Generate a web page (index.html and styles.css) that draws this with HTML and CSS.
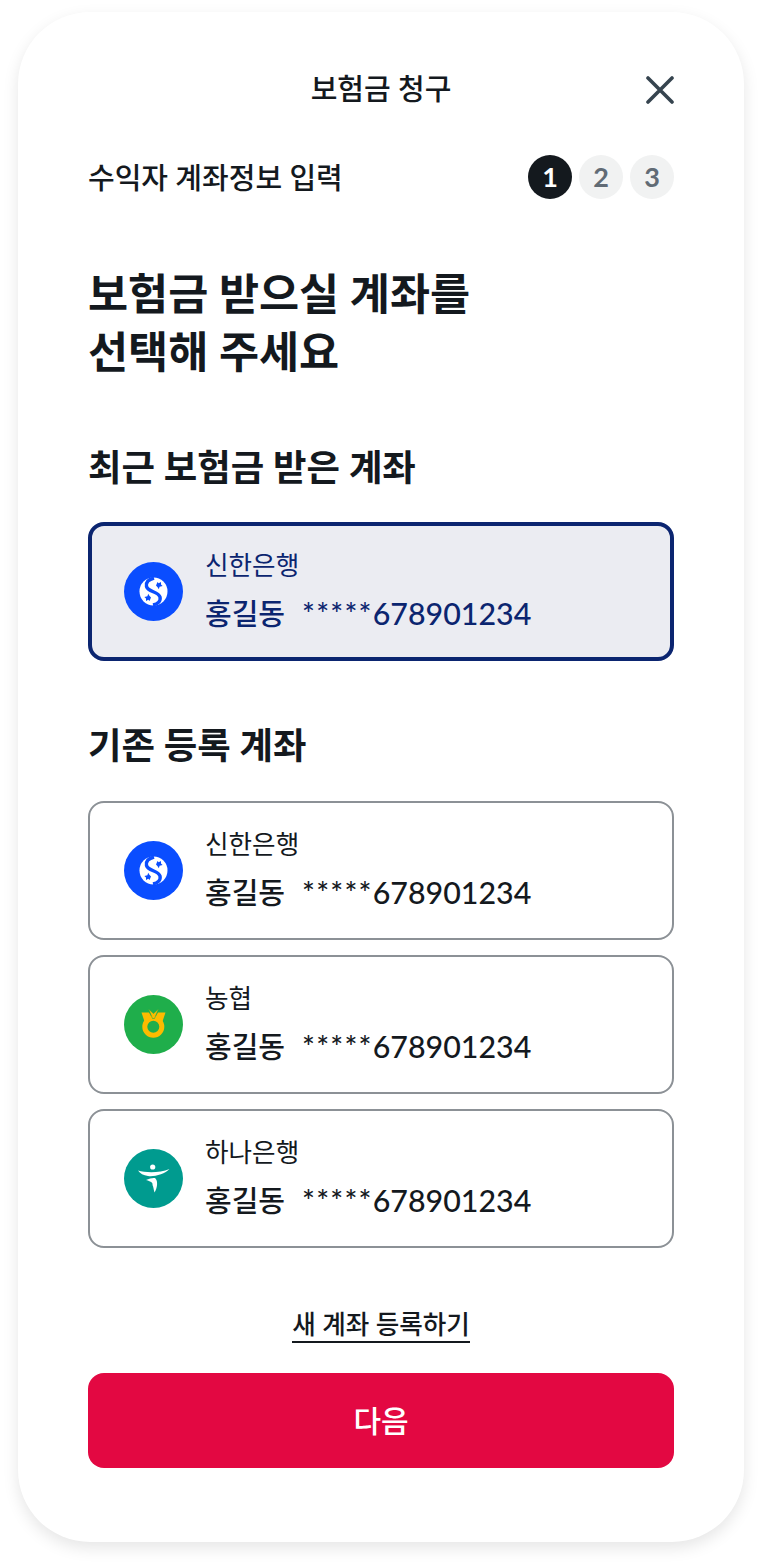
FILE: index.html
```html
<!DOCTYPE html>
<html lang="ko">

<head>
    <meta charset="UTF-8">
    <meta name="viewport" content="width=device-width, initial-scale=1.0">
    <title>보험금 청구</title>
    <link rel="stylesheet" href="styles.css">
</head>

<body>
    <div class="sheet">
        <div class="header">
            <span></span>
            <h1 class="headerTitle">보험금 청구</h1>
            <button class="close" aria-label="닫기">
                <svg width="28" height="28" viewBox="0 0 28 28" fill="none">
                    <path d="M2 2L26 26M26 2L2 26" stroke="#36444f" stroke-width="3.6" stroke-linecap="round"/>
                </svg>
            </button>
        </div>

        <div class="stepRow">
            <p class="stepName">수익자 계좌정보 입력</p>
            <div class="steps">
                <span class="step active">1</span>
                <span class="step">2</span>
                <span class="step">3</span>
            </div>
        </div>

        <h2 class="question">보험금 받으실 계좌를<br>선택해 주세요</h2>

        <h3 class="sectionTitle recent">최근 보험금 받은 계좌</h3>
        <div class="account selected">
            <svg class="logo" viewBox="0 0 59 59">
                <circle cx="29.5" cy="29.5" r="29.5" fill="#0a4dff"/>
                <circle cx="29.5" cy="29.5" r="14" fill="#fff"/>
                <path d="M30 16C24.5 17.5 21.5 20.5 22.5 24.5C24 30 34.5 29.5 36 35C37 39 34 42 29 43" stroke="#0a4dff" stroke-width="3.4" fill="none"/>
                <path d="M32 23.5l1.5-3.5 1.2 1.2 2.3-1.2 0 2.6 1.6 1.4-3 .8-.8 2.4-1.2-2z" fill="#0a4dff"/>
                <path d="M32 23.5l1.5-3.5 1.2 1.2 2.3-1.2 0 2.6 1.6 1.4-3 .8-.8 2.4-1.2-2z" fill="#0a4dff" transform="rotate(180 29.5 29.5)"/>
            </svg>
            <div class="accountText">
                <p class="bank">신한은행</p>
                <p class="number"><span class="holder">홍길동</span><span class="mask">*****</span>678901234</p>
            </div>
        </div>

        <h3 class="sectionTitle saved">기존 등록 계좌</h3>
        <div class="accountList">
            <div class="account">
                <svg class="logo" viewBox="0 0 59 59">
                    <circle cx="29.5" cy="29.5" r="29.5" fill="#0a4dff"/>
                    <circle cx="29.5" cy="29.5" r="14" fill="#fff"/>
                    <path d="M30 16C24.5 17.5 21.5 20.5 22.5 24.5C24 30 34.5 29.5 36 35C37 39 34 42 29 43" stroke="#0a4dff" stroke-width="3.4" fill="none"/>
                    <path d="M32 23.5l1.5-3.5 1.2 1.2 2.3-1.2 0 2.6 1.6 1.4-3 .8-.8 2.4-1.2-2z" fill="#0a4dff"/>
                    <path d="M32 23.5l1.5-3.5 1.2 1.2 2.3-1.2 0 2.6 1.6 1.4-3 .8-.8 2.4-1.2-2z" fill="#0a4dff" transform="rotate(180 29.5 29.5)"/>
                </svg>
                <div class="accountText">
                    <p class="bank">신한은행</p>
                    <p class="number"><span class="holder">홍길동</span><span class="mask">*****</span>678901234</p>
                </div>
            </div>
            <div class="account">
                <svg class="logo" viewBox="0 0 59 59">
                    <circle cx="29.5" cy="29.5" r="29.5" fill="#1fae4b"/>
                    <circle cx="29.3" cy="31.7" r="8.5" fill="none" stroke="#fdbb00" stroke-width="5"/>
                    <path d="M17.5 17.5L25 17.5L29 24.5L23 25.5L21 28Z" fill="#fdbb00"/>
                    <path d="M41.5 17.5L34 17.5L30 24.5L36 25.5L38 28Z" fill="#fdbb00"/>
                    <path d="M24.5 14L29.5 18.5L34.5 14L30.5 23.5L28.5 23.5Z" fill="#fdbb00" stroke="#1fae4b" stroke-width="0.6"/>
                </svg>
                <div class="accountText">
                    <p class="bank">농협</p>
                    <p class="number"><span class="holder">홍길동</span><span class="mask">*****</span>678901234</p>
                </div>
            </div>
            <div class="account">
                <svg class="logo" viewBox="0 0 59 59">
                    <circle cx="29.5" cy="29.5" r="29.5" fill="#009b8f"/>
                    <circle cx="28.7" cy="18" r="2.6" fill="#fff"/>
                    <path d="M14 21.5C22 24 36 24 45.5 20C41 25 30 28 24 27C19.5 26.5 16 24.5 14 21.5Z" fill="#fff"/>
                    <path d="M22 31C26 29.5 30 28.5 31.5 29.5C34 32 33.5 39 30.5 43.5C29.5 40 29.5 38 28.5 36C29 34 27.5 32.5 22 31Z" fill="#fff"/>
                </svg>
                <div class="accountText">
                    <p class="bank">하나은행</p>
                    <p class="number"><span class="holder">홍길동</span><span class="mask">*****</span>678901234</p>
                </div>
            </div>
        </div>

        <a class="addAccount" href="#">새 계좌 등록하기</a>
        <button class="next">다음</button>
    </div>
</body>

</html>
```

FILE: styles.css
```css
*{
    margin: 0;
    padding: 0;
    box-sizing: border-box;
}
body{
    width: 762px;
    height: 1566px;
    padding: 12px 18px 24px;
    background-color: #fff;
    font-family: "Lato", "Noto Sans CJK KR", sans-serif;
    color: #14191e;
}
.sheet{
    height: 1530px;
    padding: 0 70px;
    display: flex;
    flex-direction: column;
    border-radius: 72px;
    background-color: #fff;
    box-shadow: 0px 6px 16px rgba(0,0,0,0.1);
}
.header{
    margin-top: 54px;
    height: 36px;
    display: grid;
    grid-template-columns: 28px 1fr 28px;
    align-items: center;
}
.headerTitle{
    text-align: center;
    font-size: 29px;
    font-weight: 500;
}
.close{
    display: flex;
    width: 28px;
    height: 28px;
    margin-top: 6px;
    border: none;
    background: none;
}
.stepRow{
    margin-top: 53px;
    height: 44px;
    display: flex;
    justify-content: space-between;
    align-items: center;
}
.stepName{
    font-size: 29px;
    font-weight: 500;
    padding-bottom: 2px;
}
.steps{
    display: flex;
    gap: 7px;
}
.step{
    width: 44px;
    height: 44px;
    padding-bottom: 2px;
    display: flex;
    justify-content: center;
    align-items: center;
    border-radius: 50%;
    font-size: 27px;
    font-weight: 700;
    color: #616b75;
    background-color: #f1f2f2;
}
.step.active{
    color: #fff;
    background-color: #14191e;
}
.question{
    margin-top: 65px;
    font-size: 43.6px;
    font-weight: 700;
    line-height: 58px;
}
.sectionTitle{
    font-size: 36.4px;
    font-weight: 700;
    line-height: 48px;
}
.recent{
    margin-top: 63px;
}
.saved{
    margin-top: 60px;
}
.account{
    height: 139px;
    padding: 0 34px;
    display: flex;
    align-items: center;
    gap: 22px;
    border: 2px solid #8c9196;
    border-radius: 16px;
}
.recent + .account{
    margin-top: 31px;
}
.selected{
    color: #0b2570;
    border: 4px solid #0b2570;
    padding: 0 32px;
    background-color: #ebecf2;
}
.logo{
    width: 59px;
    height: 59px;
    flex-shrink: 0;
}
.accountText{
    display: flex;
    flex-direction: column;
    gap: 11px;
    padding-bottom: 2px;
}
.bank{
    font-size: 25.6px;
    line-height: 34px;
}
.number{
    font-size: 30.4px;
    font-weight: 500;
    line-height: 40px;
}
.holder{
    margin-right: 17px;
    font-size: 29px;
}
.mask{
    letter-spacing: 1.2px;
}
.accountList{
    margin-top: 32px;
    display: flex;
    flex-direction: column;
    gap: 15px;
}
.addAccount{
    margin-top: 59px;
    align-self: center;
    font-size: 25.6px;
    font-weight: 500;
    line-height: 34px;
    color: #14191e;
    text-decoration: none;
    border-bottom: 2px solid #14191e;
}
.next{
    margin-top: 30px;
    height: 95px;
    padding-bottom: 4px;
    border: none;
    border-radius: 16px;
    font-family: inherit;
    font-size: 30px;
    font-weight: 500;
    color: #fff;
    background-color: #e30842;
}
```
